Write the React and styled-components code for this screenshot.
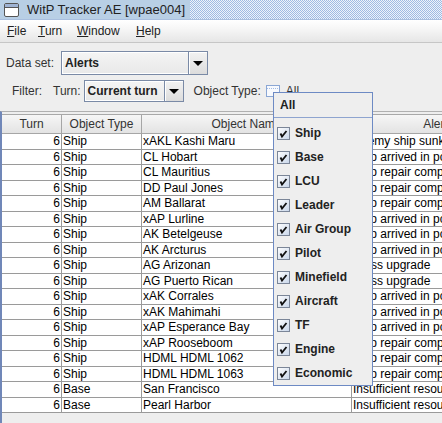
import React from "react";
import styled, { createGlobalStyle } from "styled-components";

const Global = createGlobalStyle`
  html, body { margin: 0; padding: 0; background: #eeeeee; }
  body { font-family: "Liberation Sans", Arial, sans-serif; font-size: 12px; color: #333; }
`;

const Frame = styled.div`
  position: relative;
  width: 442px;
  height: 423px;
  overflow: hidden;
  background: #eeeeee;
  display: flex;
  flex-direction: column;
`;

const TitleBar = styled.div`
  height: 20px;
  flex: none;
  display: flex;
  align-items: stretch;
  background: repeating-conic-gradient(#eef3fb 0 25%, #9fbbe3 0 50%) 0 0 / 2px 2px;
  border-bottom: 1px solid #a9bfdf;
  box-sizing: border-box;
`;

const TitleLead = styled.div`
  display: flex;
  align-items: center;
  gap: 8px;
  padding: 0 5px 0 4px;
  background: #b8cfe5;
`;

const TitleText = styled.span`
  font-size: 13px;
  color: #222;
  white-space: nowrap;
`;

const MenuBar = styled.div`
  height: 23px;
  flex: none;
  display: flex;
  align-items: center;
  padding-left: 7px;
  box-sizing: border-box;
  background: linear-gradient(#ffffff, #f6f6f6 40%, #e6e6e6);
  border-bottom: 1px solid #c6c6c6;
`;

const MenuItem = styled.span`
  width: ${(p) => p.$w}px;
  flex: none;
  font-size: 12px;
  color: #222;
  u { text-decoration: underline; }
`;

const Body = styled.div`
  display: flex;
  flex-direction: column;
  flex: 1;
  min-height: 0;
`;

const FormRow = styled.div`
  display: flex;
  align-items: center;
  height: ${(p) => p.$h}px;
  margin-top: ${(p) => p.$top}px;
  padding-left: ${(p) => p.$left}px;
`;

const Label = styled.span`
  color: #333;
  white-space: nowrap;
  margin-right: ${(p) => p.$gap || 0}px;
`;

const Combo = styled.div`
  display: flex;
  width: ${(p) => p.$w}px;
  height: ${(p) => p.$h}px;
  box-sizing: border-box;
  border: 1px solid #7a8aa6;
  background: #eeeeee;
  margin-right: ${(p) => p.$gap || 0}px;
`;

const ComboField = styled.div`
  flex: 1;
  display: flex;
  align-items: center;
  padding-left: 2px;
  font-weight: bold;
  color: #222;
  border: 1px solid #ffffff;
  border-right: none;
  background: linear-gradient(#f4f4f4, #e9e9e9);
`;

const ComboButton = styled.div`
  width: 18px;
  flex: none;
  display: flex;
  align-items: center;
  justify-content: center;
  border-left: 1px solid #7a8aa6;
  background: linear-gradient(#f2f2f2, #dcdcdc);
  box-shadow: inset 1px 1px 0 #ffffff;
  &::after {
    content: "";
    border-left: 5px solid transparent;
    border-right: 5px solid transparent;
    border-top: 5px solid #000;
  }
`;

const TypeBox = styled.div`
  width: 14px;
  height: 12px;
  margin: 0 6px 0 5px;
  box-sizing: border-box;
  border: 1px solid #8aa6d4;
  background:
    repeating-linear-gradient(90deg, #9fbbe6 0 1px, transparent 1px 2px) 0 2px / 100% 1px no-repeat,
    #f7f9fd;
`;

const TablePane = styled.div`
  margin-top: 9px;
  border-top: 1px solid #b0b0b0;
  border-left: 2px solid #7087b8;
  padding-top: 2px;
  flex: 1;
  min-height: 0;
  overflow: hidden;
  background: #eeeeee;
`;

const Row = styled.div`
  display: flex;
  height: ${(p) => (p.$head ? 19 : 15.5)}px;
  background: ${(p) => (p.$head ? "linear-gradient(#f6f6f6, #e2e2e2)" : "#ffffff")};
  border-top: ${(p) => (p.$head ? "1px solid #a8a8a8" : "none")};
`;

const Cell = styled.div`
  flex: none;
  width: ${(p) => p.$w}px;
  box-sizing: border-box;
  border-right: 1px solid ${(p) => (p.$head ? "#a6a6a6" : "#9a9a9a")};
  border-bottom: 1px solid ${(p) => (p.$head ? "#a6a6a6" : "#9a9a9a")};
  padding: 0 1px;
  display: flex;
  align-items: center;
  justify-content: ${(p) => (p.$head ? "center" : p.$right ? "flex-end" : "flex-start")};
  white-space: nowrap;
  overflow: hidden;
  color: ${(p) => (p.$head ? "#333" : "#000")};
  font-size: 12px;
`;

const Popup = styled.div`
  position: absolute;
  left: 273px;
  top: 92px;
  width: 100px;
  height: 294px;
  box-sizing: border-box;
  border: 1px solid #6d8ac4;
  background: #eeeeee;
  display: flex;
  flex-direction: column;
`;

const PopupHead = styled.div`
  height: 24px;
  display: flex;
  align-items: center;
  padding-left: 6px;
  font-weight: bold;
  color: #222;
  border-bottom: 1px solid #8ea4cf;
  margin-bottom: 3px;
`;

const PopupItem = styled.div`
  height: 24px;
  display: flex;
  align-items: center;
  padding-left: 3px;
  gap: 5px;
  font-weight: bold;
  color: #222;
`;

const WinIcon = () => (
  <svg width="15" height="14" viewBox="0 0 15 14">
    <rect x="0.5" y="0.5" width="14" height="13" rx="1.5" fill="#ffffff" stroke="#555" />
    <rect x="1" y="1" width="13" height="3" fill="#9fb3d3" />
    <line x1="1" y1="4.5" x2="14" y2="4.5" stroke="#555" />
  </svg>
);

const CheckIcon = () => (
  <svg width="13" height="13" viewBox="0 0 13 13">
    <defs>
      <linearGradient id="cb" x1="0" y1="0" x2="1" y2="1">
        <stop offset="0" stopColor="#ffffff" />
        <stop offset="1" stopColor="#c8d6ea" />
      </linearGradient>
    </defs>
    <rect x="0.5" y="0.5" width="12" height="12" fill="url(#cb)" stroke="#7b8698" />
    <path d="M3.5 6.5 L5 9.5 L9.5 4" fill="none" stroke="#111" strokeWidth="1.8" />
  </svg>
);

const menus = [
  ["F", "ile", 31],
  ["T", "urn", 39],
  ["W", "indow", 59],
  ["H", "elp", 30],
];

const cols = [
  ["Turn", 60],
  ["Object Type", 80],
  ["Object Name", 210],
  ["Alert", 168],
];

const rows = [
  ["Ship", "xAKL Kashi Maru", "Enemy ship sunk"],
  ["Ship", "CL Hobart", "Ship arrived in port"],
  ["Ship", "CL Mauritius", "Ship repair complete"],
  ["Ship", "DD Paul Jones", "Ship repair complete"],
  ["Ship", "AM Ballarat", "Ship repair complete"],
  ["Ship", "xAP Lurline", "Ship arrived in port"],
  ["Ship", "AK Betelgeuse", "Ship arrived in port"],
  ["Ship", "AK Arcturus", "Ship arrived in port"],
  ["Ship", "AG Arizonan", "Class upgrade"],
  ["Ship", "AG Puerto Rican", "Class upgrade"],
  ["Ship", "xAK Corrales", "Ship arrived in port"],
  ["Ship", "xAK Mahimahi", "Ship arrived in port"],
  ["Ship", "xAP Esperance Bay", "Ship arrived in port"],
  ["Ship", "xAP Rooseboom", "Ship repair complete"],
  ["Ship", "HDML HDML 1062", "Ship repair complete"],
  ["Ship", "HDML HDML 1063", "Ship repair complete"],
  ["Base", "San Francisco", "Insufficient resources"],
  ["Base", "Pearl Harbor", "Insufficient resources"],
];

const types = ["Ship", "Base", "LCU", "Leader", "Air Group", "Pilot", "Minefield", "Aircraft", "TF", "Engine", "Economic"];

export default function App() {
  return (
    <Frame>
      <Global />
      <TitleBar>
        <TitleLead>
          <WinIcon />
          <TitleText>WitP Tracker AE [wpae004]</TitleText>
        </TitleLead>
      </TitleBar>
      <MenuBar>
        {menus.map(([u, rest, w]) => (
          <MenuItem key={u} $w={w}>
            <u>{u}</u>
            {rest}
          </MenuItem>
        ))}
      </MenuBar>
      <Body>
        <FormRow $top={8} $left={6} $h={24}>
          <Label $gap={7}>Data set:</Label>
          <Combo $w={147} $h={24}>
            <ComboField>Alerts</ComboField>
            <ComboButton />
          </Combo>
        </FormRow>
        <FormRow $top={5} $left={12} $h={22}>
          <Label $gap={11}>Filter:</Label>
          <Label $gap={3}>Turn:</Label>
          <Combo $w={100} $h={22} $gap={10}>
            <ComboField>Current turn</ComboField>
            <ComboButton />
          </Combo>
          <Label>Object Type:</Label>
          <TypeBox />
          <Label>All</Label>
        </FormRow>
        <TablePane>
          <Row $head>
            {cols.map(([t, w]) => (
              <Cell key={t} $w={w} $head>
                {t}
              </Cell>
            ))}
          </Row>
          {rows.map(([type, name, alert], i) => (
            <Row key={i}>
              <Cell $w={60} $right>6</Cell>
              <Cell $w={80}>{type}</Cell>
              <Cell $w={210}>{name}</Cell>
              <Cell $w={168}>{alert}</Cell>
            </Row>
          ))}
        </TablePane>
      </Body>
      <Popup>
        <PopupHead>All</PopupHead>
        {types.map((t) => (
          <PopupItem key={t}>
            <CheckIcon />
            {t}
          </PopupItem>
        ))}
      </Popup>
    </Frame>
  );
}
